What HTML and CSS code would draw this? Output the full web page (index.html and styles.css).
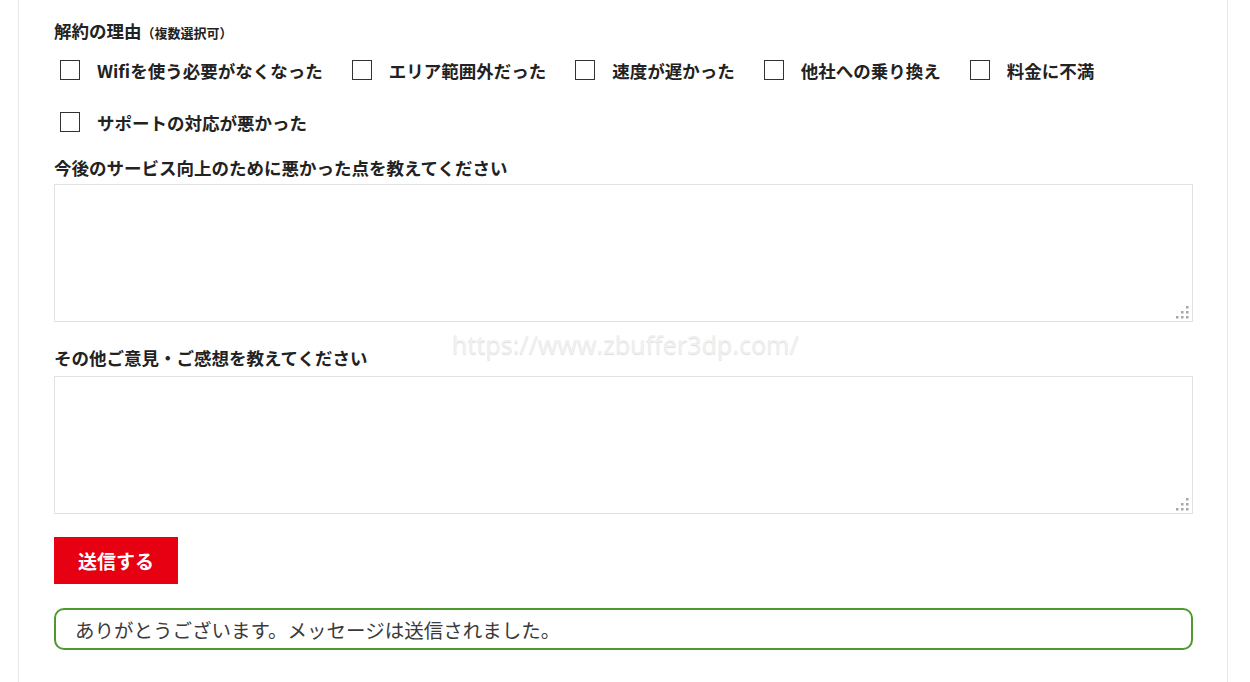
FILE: index.html
```html
<!DOCTYPE html>
<html lang="ja">
<head>
<meta charset="utf-8">
<title>解約フォーム</title>
<link rel="stylesheet" href="styles.css">
</head>
<body>
<div class="panel">
  <form class="form">
    <p class="heading">解約の理由<span class="sub">（複数選択可）</span></p>
    <div class="checks">
      <label class="check"><input type="checkbox" class="box"><span>Wifiを使う必要がなくなった</span></label>
      <label class="check"><input type="checkbox" class="box"><span>エリア範囲外だった</span></label>
      <label class="check"><input type="checkbox" class="box"><span>速度が遅かった</span></label>
      <label class="check"><input type="checkbox" class="box"><span>他社への乗り換え</span></label>
      <label class="check"><input type="checkbox" class="box"><span>料金に不満</span></label>
      <label class="check"><input type="checkbox" class="box"><span>サポートの対応が悪かった</span></label>
    </div>
    <p class="heading h2">今後のサービス向上のために悪かった点を教えてください</p>
    <div class="area-wrap">
      <textarea class="area"></textarea>
      <svg class="grip" width="13" height="13" viewBox="0 0 13 13"><g fill="#a6a6a6"><rect x="10" y="0" width="2.5" height="2.5"/><rect x="5" y="5" width="2.5" height="2.5"/><rect x="10" y="5" width="2.5" height="2.5"/><rect x="0" y="10" width="2.5" height="2.5"/><rect x="5" y="10" width="2.5" height="2.5"/><rect x="10" y="10" width="2.5" height="2.5"/></g></svg>
    </div>
    <p class="heading h3">その他ご意見・ご感想を教えてください</p>
    <div class="area-wrap">
      <textarea class="area"></textarea>
      <svg class="grip" width="13" height="13" viewBox="0 0 13 13"><g fill="#a6a6a6"><rect x="10" y="0" width="2.5" height="2.5"/><rect x="5" y="5" width="2.5" height="2.5"/><rect x="10" y="5" width="2.5" height="2.5"/><rect x="0" y="10" width="2.5" height="2.5"/><rect x="5" y="10" width="2.5" height="2.5"/><rect x="10" y="10" width="2.5" height="2.5"/></g></svg>
    </div>
    <button type="button" class="submit">送信する</button>
    <div class="message">ありがとうございます。メッセージは送信されました。</div>
  </form>
  <div class="watermark">https://www.zbuffer3dp.com/</div>
</div>
</body>
</html>
```

FILE: styles.css
```css
html, body {
  margin: 0;
  padding: 0;
  background: #fff;
  height: 100%;
}
body {
  font-family: "Noto Sans CJK JP", "Noto Sans", sans-serif;
  color: #222;
  overflow: hidden;
}
.panel {
  position: relative;
  margin-left: 18px;
  width: 1210px;
  min-height: 682px;
  border-left: 1px solid #e8e8e8;
  border-right: 1px solid #e8e8e8;
  padding: 19px 34px 0 35px;
  box-sizing: border-box;
}
.form {
  display: flex;
  flex-direction: column;
  align-items: flex-start;
}
.heading {
  margin: 0;
  font-size: 17.5px;
  line-height: 24px;
  font-weight: 700;
  color: #222;
}
.sub {
  font-size: 13px;
  font-weight: 700;
}
.checks {
  display: flex;
  flex-wrap: wrap;
  row-gap: 20px;
  margin-top: 9px;
  width: 100%;
}
.check {
  display: flex;
  align-items: center;
  height: 32px;
  margin-left: 6px;
  margin-right: 23px;
  font-size: 17.5px;
  font-weight: 700;
  color: #222;
}
.box {
  appearance: none;
  -webkit-appearance: none;
  width: 20px;
  height: 20px;
  margin: 0 17px 0 0;
  border: 1.5px solid #333;
  background: #fff;
  box-sizing: border-box;
  border-radius: 0;
}
.h2 {
  margin-top: 18px;
}
.h3 {
  margin-top: 24px;
}
.area-wrap {
  position: relative;
  width: 100%;
  margin-top: 4px;
}
.h3 + .area-wrap {
  margin-top: 6px;
}
.area {
  display: block;
  width: 100%;
  height: 138px;
  box-sizing: border-box;
  border: 1.5px solid #e2e2e2;
  border-radius: 0;
  resize: none;
  background: #fff;
  margin: 0;
}
.grip {
  position: absolute;
  right: 4px;
  bottom: 3px;
}
.submit {
  margin-top: 23px;
  width: 124px;
  height: 47px;
  border: none;
  background: #e60012;
  color: #fff;
  font-family: "Noto Sans CJK JP", "Noto Sans", sans-serif;
  font-size: 19px;
  font-weight: 700;
  padding: 0;
  cursor: pointer;
}
.message {
  margin-top: 24px;
  width: 100%;
  height: 42px;
  box-sizing: border-box;
  border: 2px solid #4e9a2c;
  border-radius: 10px;
  padding: 0 19px;
  display: flex;
  align-items: center;
  font-size: 19.5px;
  color: #3a3a3a;
}
.watermark {
  position: absolute;
  left: 433px;
  top: 327px;
  font-family: "Open Sans", "DejaVu Sans", sans-serif;
  font-size: 25px;
  letter-spacing: 0.1px;
  color: #f0f0f0;
  text-shadow: 0 1px 1px #dcdcdc;
  pointer-events: none;
}
```
